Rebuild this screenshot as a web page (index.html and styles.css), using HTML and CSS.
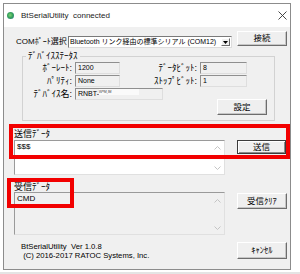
FILE: index.html
```html
<!DOCTYPE html>
<html lang="ja">
<head>
    <meta charset="UTF-8">
    <title>BtSerialUtility</title>
    <link rel="stylesheet" href="styles.css">
</head>
<body>
<div class="screen">
    <div class="window">
        <div class="titlebar">
            <span class="app-icon"></span>
            <span class="title">BtSerialUtility&nbsp; connected</span>
            <svg class="close" width="9" height="9" viewBox="0 0 9 9">
                <path d="M0.5 0.5 L8.5 8.5 M8.5 0.5 L0.5 8.5" stroke="#333" stroke-width="0.9" fill="none"/>
            </svg>
        </div>

        <div class="client">
            <div class="com-row">
                <span class="com-label">COMﾎﾟｰﾄ選択</span>
                <div class="combo">
                    <span class="combo-text">Bluetooth リンク経由の標準シリアル (COM12)</span>
                    <span class="combo-btn">
                        <svg width="5" height="3" viewBox="0 0 5 3"><path d="M0 0 H5 L2.5 3 Z" fill="#000"/></svg>
                    </span>
                </div>
                <button class="btn">接続</button>
            </div>

            <fieldset class="status">
                <legend>ﾃﾞﾊﾞｲｽｽﾃｰﾀｽ</legend>
                <div class="status-grid">
                    <span class="lbl">ﾎﾞｰﾚｰﾄ:</span>
                    <span class="field">1200</span>
                    <span class="lbl">ﾃﾞｰﾀﾋﾞｯﾄ:</span>
                    <span class="field">8</span>
                    <span class="lbl">ﾊﾟﾘﾃｨ:</span>
                    <span class="field">None</span>
                    <span class="lbl">ｽﾄｯﾌﾟﾋﾞｯﾄ:</span>
                    <span class="field">1</span>
                    <span class="lbl">ﾃﾞﾊﾞｲｽ名:</span>
                    <span class="field wide">RNBT-<span class="mask">ᵂ*ᴹ.ᴵᴹ</span></span>
                </div>
                <button class="btn set">設定</button>
            </fieldset>

            <div class="sec-label send-label">送信ﾃﾞｰﾀ</div>
            <div class="data-row">
                <div class="databox send-box">
                    <div class="data-text">$$$</div>
                    <div class="scroll send-scroll">
                        <svg width="7" height="4" viewBox="0 0 7 4"><path d="M0.5 3.5 L3.5 0.5 L6.5 3.5" stroke="#c4c4c4" fill="none"/></svg>
                        <svg width="7" height="4" viewBox="0 0 7 4"><path d="M0.5 0.5 L3.5 3.5 L6.5 0.5" stroke="#c4c4c4" fill="none"/></svg>
                    </div>
                </div>
                <button class="btn default send-btn">送信</button>
            </div>

            <div class="sec-label recv-label">受信ﾃﾞｰﾀ</div>
            <div class="data-row">
                <div class="databox recv-box">
                    <div class="data-text">CMD</div>
                    <div class="scroll recv-scroll">
                        <svg width="7" height="4" viewBox="0 0 7 4"><path d="M0.5 3.5 L3.5 0.5 L6.5 3.5" stroke="#c4c4c4" fill="none"/></svg>
                        <svg width="7" height="4" viewBox="0 0 7 4"><path d="M0.5 0.5 L3.5 3.5 L6.5 0.5" stroke="#c4c4c4" fill="none"/></svg>
                    </div>
                </div>
                <button class="btn clear-btn">受信ｸﾘｱ</button>
            </div>

            <div class="footer">
                <div class="about">BtSerialUtility  Ver 1.0.8
 (C) 2016-2017 RATOC Systems, Inc.</div>
                <button class="btn cancel">ｷｬﾝｾﾙ</button>
            </div>
        </div>
    </div>
    <div class="desk-line"></div>

    <!-- 注目枠 -->
    <div class="mark mark-send"></div>
    <div class="mark mark-recv"></div>
</div>
</body>
</html>
```

FILE: styles.css
```css
body {
    margin: 0;
    background-color: #fff;
    font-family: "Liberation Sans", "Noto Sans CJK JP", sans-serif;
    font-size: 8px;
    color: #000;
}

.screen {
    position: relative;
    width: 300px;
    height: 274px;
    padding: 3px 0 0 3px;
    box-sizing: border-box;
    overflow: hidden;
}

.window {
    width: 288px;
    height: 267px;
    box-sizing: border-box;
    border: 1px solid #8c8c8c;
    background-color: #f0f0f0;
    display: flex;
    flex-direction: column;
}

.desk-line {
    height: 2px;
    margin: 2px 0 0 -3px;
    background-color: #e4e4e4;
}

/* タイトルバー */
.titlebar {
    height: 23px;
    flex: none;
    background-color: #fff;
    display: flex;
    align-items: center;
    padding-left: 3px;
}

.app-icon {
    width: 7px;
    height: 7px;
    border-radius: 50%;
    background: radial-gradient(circle at 45% 45%, #7fd37a 0, #3aa55a 45%, #1f6f8a 100%);
    margin-right: 7px;
}

.title {
    font-size: 8px;
    color: #222;
}

.close {
    margin-left: auto;
    margin-right: 3px;
}

/* 本体 */
.client {
    flex: 1;
    padding-left: 10px;
}

.com-row {
    display: flex;
    align-items: flex-start;
    margin-top: 4px;
}

.com-label {
    width: 52px;
    margin: 5px 0 0 2px;
    line-height: 12px;
    white-space: nowrap;
}

.combo {
    width: 164px;
    height: 12px;
    margin-top: 5px;
    box-sizing: border-box;
    border: 1px solid #7a7a7a;
    border-right-color: #dcdcdc;
    border-bottom-color: #dcdcdc;
    background-color: #fff;
    display: flex;
    align-items: center;
}

.combo-text {
    flex: 1;
    padding-left: 1px;
    white-space: nowrap;
    overflow: hidden;
    font-size: 7px;
    line-height: 10px;
}

.combo-btn {
    width: 9px;
    height: 8px;
    margin-right: 1px;
    box-sizing: border-box;
    border: 1px solid;
    border-color: #fff #6a6a6a #6a6a6a #fff;
    background-color: #f0f0f0;
    display: flex;
    align-items: center;
    justify-content: center;
}

.btn {
    width: 50px;
    height: 15px;
    padding: 0;
    box-sizing: border-box;
    border: 1px solid;
    border-color: #fff #6d6d6d #6d6d6d #fff;
    box-shadow: inset -1px -1px 0 #c6c6c6;
    background-color: #efefef;
    font-family: "Liberation Sans", "Noto Sans CJK JP", sans-serif;
    font-size: 8.5px;
    color: #000;
    line-height: 11px;
}

.com-row .btn {
    margin-left: 5px;
}

/* デバイスステータス */
.status {
    width: 253px;
    margin: 3px 0 0 8px;
    padding: 0 0 5px 0;
    box-sizing: border-box;
    border: 1px solid #d2d2d2;
    min-width: 0;
}

.status legend {
    margin-left: 3px;
    padding: 0 2px;
    font-size: 9px;
    line-height: 10px;
}

.status-grid {
    display: grid;
    grid-template-columns: 49px 45px 74px 47px;
    grid-auto-rows: 12px;
    column-gap: 3px;
    row-gap: 1px;
    margin-top: 1px;
}

.lbl {
    text-align: right;
    font-size: 9px;
    line-height: 12px;
    white-space: nowrap;
}

.field {
    box-sizing: border-box;
    border: 1px solid;
    border-color: #8f8f8f #dedede #dedede #8f8f8f;
    background-color: #f0f0f0;
    padding-left: 2px;
    font-size: 7px;
    line-height: 10px;
    white-space: nowrap;
    overflow: hidden;
}

.field.wide {
    grid-column: 2 / 4;
    width: 88px;
}

.mask {
    display: inline-block;
    width: 40px;
    background-color: #fafafa;
    font-size: 5px;
    line-height: 6px;
    vertical-align: top;
    color: #555;
}

.btn.set {
    display: block;
    height: 16px;
    margin: -1px 7px 0 auto;
}

/* 送信・受信データ */
.sec-label {
    font-size: 9px;
    line-height: 10px;
}

.send-label {
    margin-top: 8px;
}

.recv-label {
    margin-top: 7px;
}

.data-row {
    display: flex;
    align-items: flex-start;
}

.databox {
    width: 211px;
    box-sizing: border-box;
    border: 1px solid;
    border-color: #9a9a9a #e0e0e0 #e0e0e0 #9a9a9a;
    display: flex;
}

.send-box {
    height: 35px;
    margin-top: 1px;
    background-color: #fff;
}

.recv-box {
    height: 43px;
    background-color: #f0f0f0;
}

.data-text {
    flex: 1;
    padding: 1px 2px;
    line-height: 10px;
}

.scroll {
    width: 13px;
    display: flex;
    flex-direction: column;
    align-items: center;
    justify-content: space-between;
}

.send-scroll {
    padding: 5px 0 4px;
}

.recv-scroll {
    padding: 6px 0 4px;
}

.send-btn {
    width: 49px;
    height: 14px;
    margin: 1px 0 0 12px;
}

.btn.default {
    border-color: #3c3c3c;
    box-shadow: inset 1px 1px 0 #fff, inset -1px -1px 0 #8a8a8a;
}

.clear-btn {
    height: 16px;
    margin: 1px 0 0 12px;
}

/* フッター */
.footer {
    display: flex;
    align-items: flex-start;
    margin-top: 7px;
}

.about {
    padding-left: 7px;
    white-space: pre;
    line-height: 9px;
    font-size: 7.7px;
}

.btn.cancel {
    height: 17px;
    margin: 0 3px 0 auto;
}

/* 赤枠 */
.mark {
    position: absolute;
    box-sizing: border-box;
    border: 4px solid #f20000;
}

.mark-send {
    left: 9px;
    top: 124px;
    width: 281px;
    height: 35px;
}

.mark-recv {
    left: 7px;
    top: 178px;
    width: 67px;
    height: 30px;
}
```
